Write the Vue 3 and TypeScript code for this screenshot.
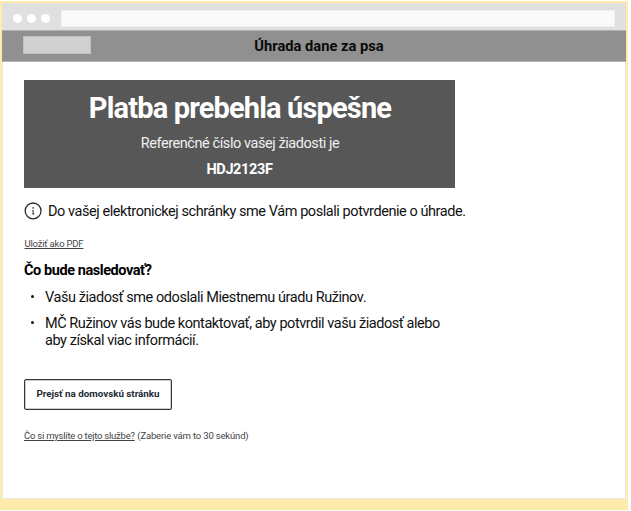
<script setup lang="ts">
const title: string = 'Úhrada dane za psa'
const reference: string = 'HDJ2123F'
const steps: string[] = [
  'Vašu žiadosť sme odoslali Miestnemu úradu Ružinov.',
  'MČ Ružinov vás bude kontaktovať, aby potvrdil vašu žiadosť alebo aby získal viac informácií.',
]
</script>

<template>
  <div class="canvas">
    <div class="window">
      <div class="chrome">
        <i v-for="n in 3" :key="n" class="dot"></i>
        <div class="address"></div>
      </div>
      <header class="header">
        <div class="logo"></div>
        <span class="header-title">{{ title }}</span>
      </header>
      <main class="content">
        <section class="banner">
          <h1>Platba prebehla úspešne</h1>
          <p>Referenčné číslo vašej žiadosti je</p>
          <strong>{{ reference }}</strong>
        </section>
        <div class="notice">
          <svg width="18" height="18" viewBox="0 0 18 18" fill="none">
            <circle cx="9.1" cy="8.9" r="7.9" stroke="#2b3038" stroke-width="1.3" />
            <circle cx="9.1" cy="5.9" r="0.8" fill="#2b3038" />
            <path d="M8.3 8.4H9.2V12M8.2 12H10.2" stroke="#2b3038" stroke-width="1" />
          </svg>
          <span>Do vašej elektronickej schránky sme Vám poslali potvrdenie o úhrade.</span>
        </div>
        <a class="pdf">Uložiť ako PDF</a>
        <h2>Čo bude nasledovať?</h2>
        <ul>
          <li v-for="step in steps" :key="step">{{ step }}</li>
        </ul>
        <button type="button">Prejsť na domovskú stránku</button>
        <div class="feedback">
          <a>Čo si myslíte o tejto službe?</a>
          <span>(Zaberie vám to 30 sekúnd)</span>
        </div>
      </main>
    </div>
  </div>
</template>

<style>
body {
  background: #fff;
}
</style>

<style scoped>
.canvas {
  box-sizing: border-box;
  width: 628px;
  height: 509px;
  margin-top: 1px;
  padding: 2px 2px 10px;
  background: #ffecaa;
  font-family: Roboto, "Liberation Sans", sans-serif;
}
.window {
  box-sizing: border-box;
  width: 624px;
  height: 496px;
  background: #fff;
  box-shadow: inset 0 0 0 1px #e8e8e8;
}
.chrome {
  box-sizing: border-box;
  display: flex;
  align-items: center;
  height: 27px;
  padding: 4px 11px 0;
  background: #e0e0e0;
}
.dot {
  width: 9px;
  height: 9px;
  margin-right: 5px;
  border-radius: 50%;
  background: #fff;
}
.address {
  box-sizing: border-box;
  flex: 1;
  height: 17px;
  margin-left: 6px;
  background: #fafafa;
  border: 1px solid #f0f0f0;
}
.header {
  box-sizing: border-box;
  display: grid;
  grid-template-columns: 1fr auto 1fr;
  height: 32px;
  padding: 0 11px 0 21px;
  background: #909090;
  border-top: 1px solid #b0b0b0;
  border-bottom: 1px solid #b4b4b4;
}
.logo {
  box-sizing: border-box;
  width: 68px;
  height: 18px;
  margin-top: 5px;
  background: #d0d0d0;
  border: 1px solid #c0c0c0;
}
.header-title {
  color: #0a0a0a;
  font-size: 14.7px;
  font-weight: 700;
  line-height: 30px;
}
.content {
  display: flex;
  flex-direction: column;
  align-items: flex-start;
  padding: 18px 22px 0;
}
.banner {
  box-sizing: border-box;
  display: flex;
  flex-direction: column;
  align-items: center;
  width: 431px;
  height: 108px;
  padding-top: 10px;
  background: #575757;
  color: #fff;
}
h1 {
  margin: 0 0 0 1px;
  font-size: 29px;
  line-height: 36px;
  letter-spacing: -0.84px;
}
.banner p {
  margin: 8px 0 0 1px;
  color: #f0f0f0;
  font-size: 14.5px;
  line-height: 20px;
  letter-spacing: -0.43px;
}
.banner strong {
  margin-top: 6px;
  font-size: 14.5px;
  line-height: 20px;
  letter-spacing: -0.37px;
}
.notice {
  display: flex;
  align-items: center;
  gap: 6px;
  height: 20px;
  margin-top: 13px;
  color: #111;
  font-size: 14.5px;
  letter-spacing: -0.435px;
}
.pdf {
  margin-top: 17px;
  margin-left: 0.5px;
  color: #444;
  font-size: 9.5px;
  line-height: 12px;
  letter-spacing: -0.2px;
  text-decoration: underline;
}
h2 {
  margin: 11px 0 0;
  color: #000;
  font-size: 14.5px;
  line-height: 20px;
  letter-spacing: -0.43px;
}
ul {
  width: 420px;
  margin: 8px 0 0;
  padding: 0;
  list-style: none;
  color: #111;
  font-size: 14.5px;
  line-height: 17px;
  letter-spacing: -0.44px;
}
li {
  display: flex;
  margin-bottom: 9px;
}
li::before {
  content: "";
  flex: none;
  width: 3px;
  height: 3px;
  margin: 6px 11.4px 0 6.6px;
  border-radius: 50%;
  background: #111;
}
button {
  box-sizing: border-box;
  width: 148px;
  height: 31px;
  margin: 21px 0 0;
  padding: 0 0 3px;
  background: #fff;
  border: 1px solid #333740;
  border-radius: 2px;
  box-shadow: inset 0 0 0 0.5px #9a9da2;
  color: #242a34;
  font-family: inherit;
  font-size: 9.8px;
  font-weight: 700;
}
.feedback {
  display: flex;
  gap: 2.6px;
  margin-top: 20px;
  color: #444;
  font-size: 9.5px;
  line-height: 12px;
  letter-spacing: -0.23px;
}
.feedback a {
  text-decoration: underline;
}
.feedback span {
  letter-spacing: -0.17px;
}
</style>
